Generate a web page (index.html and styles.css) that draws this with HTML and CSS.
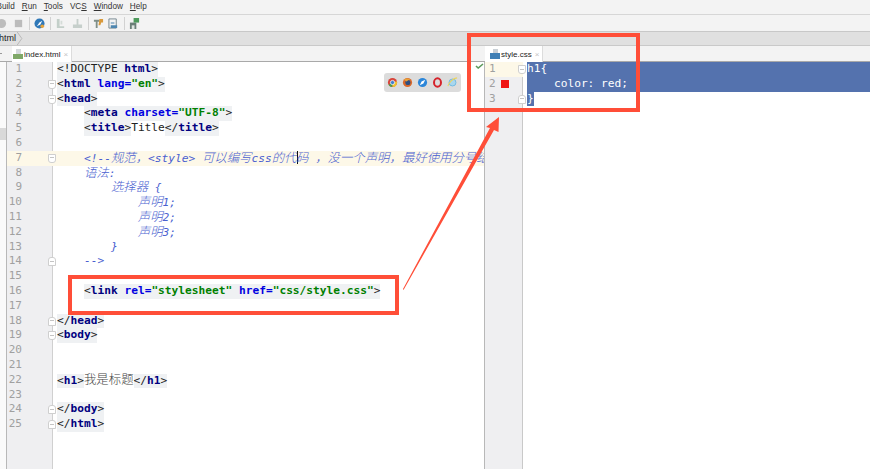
FILE: index.html
```html
<!DOCTYPE html>
<html lang="zh-CN">
<head>
    <meta charset="UTF-8">
    <title>style.css</title>
    <link rel="stylesheet" href="styles.css">
</head>
<body>
    <div class="menubar">
        <span class="menu-first">Build</span>
        <span><u>R</u>un</span>
        <span><u>T</u>ools</span>
        <span>VC<u>S</u></span>
        <span><u>W</u>indow</span>
        <span><u>H</u>elp</span>
    </div>

    <div class="toolbar">
        <svg class="tool tool-stop" viewBox="0 0 12 12"><circle cx="6" cy="6" r="5" fill="#bdbdbd"/></svg>
        <svg class="tool tool-wide" viewBox="0 0 12 12"><rect x="2" y="2" width="8" height="8" fill="#bcbcbc"/></svg>
        <i class="sep"></i>
        <svg class="tool" viewBox="0 0 12 12"><circle cx="6" cy="6" r="5.5" fill="#2f78b8"/><path d="M3 9l3-4 3-2-2 4z" fill="#fff"/><circle cx="9" cy="9" r="2" fill="#e8a33a"/></svg>
        <i class="sep"></i>
        <svg class="tool" viewBox="0 0 12 12"><path d="M2 1h3v8h5v2H2z" fill="#c3cfc9"/><path d="M6 3h2v4H6z" fill="#d5dcd8"/></svg>
        <svg class="tool tool-wide" viewBox="0 0 12 12"><path d="M5 1h2v6h4v4H1V7h4z" fill="#c6cfcb"/></svg>
        <i class="sep"></i>
        <svg class="tool" viewBox="0 0 12 12"><path d="M1 2h6v2H5v7H3V4H1z" fill="#7f8f88"/><path d="M7 1h4v4H9L8 8H6z" fill="#d99a3c"/></svg>
        <svg class="tool" viewBox="0 0 12 12"><path d="M1 1h8v10H1z" fill="none" stroke="#71848c"/><path d="M3 5h4v1H3zM3 8h7v3H3z" fill="#4e86b0"/></svg>
        <i class="sep"></i>
        <svg class="tool" viewBox="0 0 12 12"><path d="M1 5h7v7H1z" fill="#6b7f78"/><path d="M5 0h6v5H5z" fill="#4d9a5c"/><path d="M3 8h3v4H3z" fill="#dfe6e2"/></svg>
    </div>

    <div class="crumbs">
        <span class="crumb">html</span>
        <svg class="crumb-arrow" viewBox="0 0 6 14"><path d="M0 0l5 7-5 7" fill="none" stroke="#b5b5b5"/></svg>
    </div>

    <div class="panes">
        <div class="pane pane-left">
            <div class="tabs tabs-left">
                <i class="tab-tick"></i>
                <div class="tab">
                    <svg class="tab-icon" viewBox="0 0 10 10"><path d="M3 0h5v6H3z" fill="#d5d9dc"/><path d="M0 5h10v5H0z" fill="#7fa868"/></svg>
                    <span>index.html</span><span class="close">×</span>
                </div>
            </div>
            <div class="body-left">
                <div class="strip"><i class="strip-mark"></i></div>
                <div class="editor">
                    <div class="row"><span class="num">1</span><code><span class="tag">&lt;!DOCTYPE <b class="n">html</b>&gt;</span></code></div>
                    <div class="row"><span class="num">2<i class="fold"></i></span><code><span class="tag">&lt;<b class="n">html</b> <b class="a">lang</b><b class="a">=</b><b class="v">"en"</b>&gt;</span></code></div>
                    <div class="row"><span class="num">3<i class="fold"></i></span><code><span class="tag">&lt;<b class="n">head</b>&gt;</span></code></div>
                    <div class="row"><span class="num">4</span><code>    <span class="tag">&lt;<b class="n">meta</b> <b class="a">charset</b><b class="a">=</b><b class="v">"UTF-8"</b>&gt;</span></code></div>
                    <div class="row"><span class="num">5</span><code>    <span class="tag">&lt;<b class="n">title</b>&gt;</span>Title<span class="tag">&lt;/<b class="n">title</b>&gt;</span></code></div>
                    <div class="row"><span class="num">6</span><code></code></div>
                    <div class="row row-caret"><span class="num">7<i class="fold"></i></span><code class="c">    &lt;!--<span class="zh">规范，</span>&lt;style&gt; <span class="zh">可以编写</span>css<span class="zh">的代<i class="caret"></i>码</span> <span class="zh">，没一个声明，最好使用分号结束</span></code></div>
                    <div class="row"><span class="num">8</span><code class="c">    <span class="zh">语法</span>:</code></div>
                    <div class="row"><span class="num">9</span><code class="c">        <span class="zh">选择器</span> {</code></div>
                    <div class="row"><span class="num">10</span><code class="c">            <span class="zh">声明</span>1;</code></div>
                    <div class="row"><span class="num">11</span><code class="c">            <span class="zh">声明</span>2;</code></div>
                    <div class="row"><span class="num">12</span><code class="c">            <span class="zh">声明</span>3;</code></div>
                    <div class="row"><span class="num">13</span><code class="c">        }</code></div>
                    <div class="row"><span class="num">14<i class="fold fold-end"></i></span><code class="c">    --&gt;</code></div>
                    <div class="row"><span class="num">15</span><code></code></div>
                    <div class="row"><span class="num">16</span><code>    <span class="tag">&lt;<b class="n">link</b> <b class="a">rel</b><b class="a">=</b><b class="v">"stylesheet"</b> <b class="a">href</b><b class="a">=</b><b class="v">"css/style.css"</b>&gt;</span></code></div>
                    <div class="row"><span class="num">17</span><code></code></div>
                    <div class="row"><span class="num">18<i class="fold fold-end"></i></span><code><span class="tag">&lt;/<b class="n">head</b>&gt;</span></code></div>
                    <div class="row"><span class="num">19<i class="fold"></i></span><code><span class="tag">&lt;<b class="n">body</b>&gt;</span></code></div>
                    <div class="row"><span class="num">20</span><code></code></div>
                    <div class="row"><span class="num">21</span><code></code></div>
                    <div class="row"><span class="num">22</span><code><span class="tag">&lt;<b class="n">h1</b>&gt;</span><span class="zh plain">我是标题</span><span class="tag">&lt;/<b class="n">h1</b>&gt;</span></code></div>
                    <div class="row"><span class="num">23</span><code></code></div>
                    <div class="row"><span class="num">24<i class="fold fold-end"></i></span><code><span class="tag">&lt;/<b class="n">body</b>&gt;</span></code></div>
                    <div class="row"><span class="num">25<i class="fold fold-end"></i></span><code><span class="tag">&lt;/<b class="n">html</b>&gt;</span></code></div>
                </div>
            </div>
        </div>

        <div class="pane pane-right">
            <div class="tabs">
                <div class="tab tab-css">
                    <svg class="tab-icon" viewBox="0 0 10 10"><path d="M3 0h5v6H3z" fill="#c9d0d6"/><path d="M0 4h10v6H0z" fill="#3f7fb5"/></svg>
                    <span>style.css</span><span class="close">×</span>
                </div>
            </div>
            <div class="editor-right">
                <div class="row-r row-r-caret"><span class="num-r">1<i class="fold fold-r"></i></span><code class="sel sel-wide">h1{</code></div>
                <div class="row-r"><span class="num-r">2<i class="swatch"></i></span><code class="sel sel-wide">    color: red;</code></div>
                <div class="row-r"><span class="num-r">3<i class="fold fold-r fold-end"></i></span><code class="sel">}</code></div>
            </div>
        </div>
    </div>

    <!-- browser icons popup -->
    <div class="browsers">
        <svg viewBox="0 0 12 12"><circle cx="6" cy="6" r="5" fill="#d8443a"/><path d="M6 6L1.6 8.4A5 5 0 0 0 6 11z" fill="#4aa04d"/><path d="M6 6v5a5 5 0 0 0 4.8-6.5z" fill="#f1c232"/><circle cx="6" cy="6" r="2.3" fill="#3f7fd0" stroke="#fff" stroke-width=".8"/></svg>
        <svg viewBox="0 0 12 12"><circle cx="6" cy="6" r="5" fill="#d9682a"/><circle cx="6.4" cy="6" r="2.8" fill="#2f4f80"/><path d="M2 3c2-2 5-2 7 0-2 0-3 1-4 2z" fill="#e9a13a"/></svg>
        <svg viewBox="0 0 12 12"><circle cx="6" cy="6" r="5" fill="#2b86d9"/><path d="M9 3L5 5 3 9l4-2z" fill="#fff"/></svg>
        <svg viewBox="0 0 12 12"><ellipse cx="6" cy="6" rx="3.8" ry="4.6" fill="none" stroke="#d5232b" stroke-width="2.2"/></svg>
        <svg viewBox="0 0 12 12"><circle cx="6" cy="6" r="3.8" fill="#a9d7ee" stroke="#6db8e0"/><path d="M1 10c1-4 6-9 10-9" fill="none" stroke="#ecd45c" stroke-width="1.2"/></svg>
    </div>

    <svg class="check" viewBox="0 0 9 6"><path d="M1 3l2.2 2L8 1" fill="none" stroke="#5c9a5c" stroke-width="1.6"/></svg>

    <!-- red annotations -->
    <div class="mark mark-css"></div>
    <div class="mark mark-link"></div>
    <svg class="arrow" viewBox="0 0 870 469"><polygon points="403,289 490,128 486,127 499,117 498.500,132 494,130 403.500,290"/></svg>
</body>
</html>
```

FILE: styles.css
```css
body {
    margin: 0;
    width: 870px;
    height: 469px;
    overflow: hidden;
    position: relative;
    display: flex;
    flex-direction: column;
    background-color: #fff;
    font-family: "Liberation Sans", Arial, sans-serif;
    font-size: 9px;
    color: #222;
}
.menubar {
    display: flex;
    gap: 7px;
    height: 14px;
    line-height: 13px;
    background-color: #f3f3f3;
    font-size: 8.2px;
    color: #333;
}
.menu-first {
    margin-left: -3.500px;
}
.toolbar {
    display: flex;
    align-items: center;
    height: 16px;
    background-color: #f3f3f3;
    border-top: 1px solid #d6d6d6;
    border-bottom: 1px solid #c8c8c8;
}
.tool {
    flex: none;
    width: 11px;
    height: 11px;
    margin-left: 4px;
}
.tool-stop {
    margin-left: -4px;
}
.tool-wide {
    margin-left: 6px;
}
.sep {
    flex: none;
    width: 1px;
    height: 13px;
    margin-left: 5px;
    background-color: #d2d2d2;
}
.crumbs {
    display: flex;
    height: 13px;
    line-height: 13px;
    background-color: #e0e0e0;
    border-bottom: 1px solid #c9c9c9;
}
.crumb {
    font-size: 9px;
    margin-left: -1px;
}
.crumb-arrow {
    width: 6px;
    height: 13px;
    margin-left: 1px;
}
.panes {
    flex: 1;
    display: flex;
    min-height: 0;
}
.pane {
    display: flex;
    flex-direction: column;
}
.pane-left {
    width: 485px;
}
.pane-right {
    flex: 1;
}
.tabs {
    display: flex;
    height: 15px;
    background-color: #f3f3f3;
    border-bottom: 1px solid #a9a9a9;
}
.tabs-left {
    align-items: flex-start;
}
.tab-tick {
    width: 2px;
    height: 1px;
    margin: 7px 10px 0 0;
    background-color: #999;
}
.tab {
    display: flex;
    align-items: center;
    height: 16px;
    padding: 0 3px 0 1px;
    background-color: #fff;
    font-size: 8px;
    color: #222;
    border-right: 1px solid #dcdcdc;
}
.tab-css {
    padding-left: 5px;
}
.tab-icon {
    width: 10px;
    height: 10px;
    margin-right: 1px;
}
.close {
    margin-left: 3px;
    color: #c4c4c4;
}
.body-left {
    flex: 1;
    display: flex;
    min-height: 0;
}
.strip {
    width: 6px;
    padding-top: 66px;
    border-right: 1px solid #b8b8b8;
    background-color: #fafafa;
}
.strip-mark {
    display: block;
    height: 12px;
    background-color: #d9d9d9;
}
.editor {
    flex: 1;
    min-width: 0;
    border-right: 1px solid #b8b8b8;
    background: linear-gradient(to right, #efeff1 45px, #d0d0d0 45px, #d0d0d0 45.5px, #fff 45.5px);
}
.row {
    display: flex;
    height: 14.8px;
    line-height: 14.8px;
    white-space: pre;
    overflow: hidden;
}
.row-caret {
    background-color: #fdf8e8;
}
.num, .num-r {
    position: relative;
    flex: none;
    box-sizing: border-box;
    font-family: "DejaVu Sans Mono", monospace;
    font-size: 11px;
    color: #a0a0a0;
}
.num {
    width: 45px;
    padding-right: 30px;
    text-align: right;
}
code {
    font-family: "DejaVu Sans Mono", "Noto Sans CJK SC", monospace;
    font-size: 11.2px;
    color: #222;
    padding-left: 5px;
    white-space: pre;
}
.zh {
    font-family: "Noto Sans CJK SC", sans-serif;
    font-size: 12.4px;
    font-weight: 300;
    line-height: 1;
}
.tag {
    display: inline-block;
    height: 14.8px;
    background-color: #eff1f3;
}
.n, .a, .v {
    font-weight: bold;
}
.n {
    color: #000080;
}
.a {
    color: #0000e0;
}
.v {
    color: #008000;
}
.plain {
    color: #444;
}
.c {
    color: #4a5fd0;
    font-style: italic;
}
.caret {
    display: inline-block;
    width: 0;
    height: 13px;
    vertical-align: -2px;
    border-left: 1.500px solid #111;
    margin-right: -1.500px;
}
.fold {
    position: absolute;
    left: 41px;
    top: 3px;
    width: 6px;
    height: 7px;
    border: 1px solid #cfcfcf;
    border-bottom-left-radius: 3px;
    border-bottom-right-radius: 3px;
    background-color: #fff;
}
.fold::after {
    content: "";
    position: absolute;
    left: 1px;
    right: 1px;
    top: 2.500px;
    height: 1px;
    background-color: #c4c4c4;
}
.fold-end {
    border-radius: 3px 3px 0 0;
}
.editor-right {
    flex: 1;
    background: linear-gradient(to right, #efeff1 37px, #c9c9c9 37px, #c9c9c9 38px, #fff 38px);
}
.row-r {
    display: flex;
    height: 14.8px;
    line-height: 14.8px;
    white-space: pre;
}
.row-r-caret .num-r {
    background-color: #fdf8e8;
}
.num-r {
    width: 38px;
    padding-left: 4px;
}
.fold-r {
    left: 33px;
    z-index: 1;
}
.swatch {
    position: absolute;
    left: 16px;
    top: 3px;
    width: 8px;
    height: 8px;
    background-color: #f01414;
}
.row-r code {
    padding-left: 0;
    margin-left: 4px;
}
.sel {
    background-color: #5472ae;
    color: #fff;
    height: 14.8px;
}
.sel-wide {
    flex: 1;
}
.browsers {
    position: absolute;
    left: 384px;
    top: 73px;
    display: flex;
    align-items: center;
    gap: 4px;
    height: 19px;
    padding: 0 3px;
    border-radius: 3px;
    background-color: #dcdcdc;
}
.browsers svg {
    width: 11px;
    height: 11px;
}
.check {
    position: absolute;
    left: 475px;
    top: 63px;
    width: 9px;
    height: 6px;
}
.mark {
    position: absolute;
    box-sizing: border-box;
    border: 4px solid #ff4e38;
}
.mark-css {
    left: 467px;
    top: 33px;
    width: 173px;
    height: 79px;
}
.mark-link {
    left: 68px;
    top: 275px;
    width: 331px;
    height: 40px;
}
.arrow {
    position: absolute;
    left: 0;
    top: 0;
    width: 870px;
    height: 469px;
    fill: #ff4e38;
}
```
